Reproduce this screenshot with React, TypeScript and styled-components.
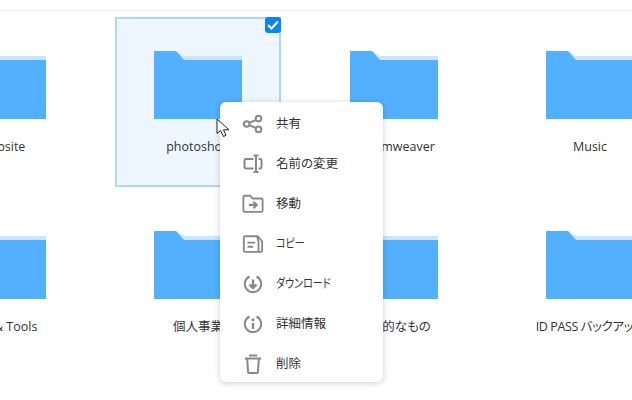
import { createGlobalStyle } from 'styled-components'
import styled from 'styled-components'

type FolderData = {
  name: string
  selected?: boolean
  tight?: boolean
}

const folders: FolderData[] = [
  { name: 'Website' },
  { name: 'photoshop', selected: true },
  { name: 'Dreamweaver' },
  { name: 'Music' },
  { name: 'Mac & Tools' },
  { name: '個人事業' },
  { name: '個人的なもの' },
  { name: 'ID PASS バックアップ', tight: true },
]

const FolderIcon = () => (
  <svg width="88" height="68" viewBox="0 0 88 68">
    <path d="M0 0H22L30 5H88V9H0Z" fill="#c9e7fd" />
    <path d="M0 0H22L30 9H88V68H0Z" fill="#52b0ff" />
  </svg>
)

const ShareIcon = () => (
  <svg width="22" height="22" viewBox="0 0 22 22" fill="none" stroke="#888" strokeWidth="2">
    <circle cx="4.7" cy="11" r="2.8" />
    <circle cx="16.5" cy="5.6" r="2.8" />
    <circle cx="16.5" cy="16.4" r="2.8" />
    <path d="M7.3 9.8L14 6.800M7.3 12.2L14 15.200" />
  </svg>
)

const RenameIcon = () => (
  <svg width="22" height="22" viewBox="0 0 22 22" fill="none" stroke="#888" strokeWidth="2">
    <path d="M11.500 6H4A1.500 1.500 0 0 0 2.500 7.500V14A1.500 1.500 0 0 0 4 15.500H11.500" />
    <path d="M16.500 6H18A1.500 1.500 0 0 1 19.500 7.500V14A1.500 1.500 0 0 1 18 15.500H16.500" />
    <path d="M14 2.500V19M11.500 2.500H16.500M11.500 19H16.500" />
  </svg>
)

const MoveIcon = () => (
  <svg width="24" height="22" viewBox="0 0 24 22" fill="none" stroke="#888" strokeWidth="2">
    <path d="M1.500 3.500A1.500 1.500 0 0 1 3 2H9L11.500 5H21A1.500 1.500 0 0 1 22.500 6.500V18A1.500 1.500 0 0 1 21 19.500H3A1.500 1.500 0 0 1 1.500 18Z" />
    <path d="M7.500 12H16M12.500 8.500L16 12L12.500 15.500" strokeWidth="2.400" />
  </svg>
)

const CopyIcon = () => (
  <svg width="24" height="22" viewBox="0 0 24 22" fill="none" stroke="#888" strokeWidth="2">
    <path d="M3.500 2.500H17L22 8V18A1.500 1.500 0 0 1 20.500 19.500H3.500A1.500 1.500 0 0 1 2 18V4A1.500 1.500 0 0 1 3.500 2.500Z" />
    <path d="M6 9.500H14.500M6 14H12" />
    <path d="M16.500 3L18 8V19" />
  </svg>
)

const DownloadIcon = () => (
  <svg width="22" height="22" viewBox="0 0 22 22" fill="none" stroke="#888" strokeWidth="2">
    <path d="M7.500 3.500A8.200 8.200 0 1 0 14.500 3.500" />
    <path d="M11 6.500V14.500M7.500 11.500L11 15L14.500 11.500" strokeWidth="2.400" />
  </svg>
)

const InfoIcon = () => (
  <svg width="22" height="22" viewBox="0 0 22 22" fill="none" stroke="#888" strokeWidth="2">
    <path d="M7.500 3.500A8.200 8.200 0 1 0 14.500 3.500" />
    <path d="M11 10V16" strokeWidth="2.400" />
    <circle cx="11" cy="6.800" r="1.500" fill="#888" stroke="none" />
  </svg>
)

const TrashIcon = () => (
  <svg width="22" height="22" viewBox="0 0 22 22" fill="none" stroke="#888" strokeWidth="2">
    <path d="M3 5.500H19M7 2.500H15" />
    <path d="M5.200 6L6 18.500A1.500 1.500 0 0 0 7.500 20H14.500A1.500 1.500 0 0 0 16 18.500L16.800 6" />
  </svg>
)

const menuItems = [
  { label: '共有', icon: <ShareIcon /> },
  { label: '名前の変更', icon: <RenameIcon /> },
  { label: '移動', icon: <MoveIcon /> },
  { label: 'コピー', icon: <CopyIcon />, katakana: true },
  { label: 'ダウンロード', icon: <DownloadIcon />, katakana: true },
  { label: '詳細情報', icon: <InfoIcon /> },
  { label: '削除', icon: <TrashIcon /> },
]

function App() {
  return (
    <Page>
      <GlobalStyle />
      <TopLine />
      <Grid>
        {folders.map((folder) => (
          <FolderCard key={folder.name} $selected={folder.selected}>
            {folder.selected && (
              <CheckBadge>
                <svg width="12" height="10" viewBox="0 0 12 10" fill="none" stroke="#fff" strokeWidth="2">
                  <path d="M1 5L4.500 8.500L11 1.500" />
                </svg>
              </CheckBadge>
            )}
            <FolderIcon />
            <FolderName $tight={folder.tight}>{folder.name}</FolderName>
          </FolderCard>
        ))}
      </Grid>
      <ContextMenu>
        {menuItems.map((item) => (
          <MenuItem key={item.label}>
            <MenuIcon>{item.icon}</MenuIcon>
            <MenuLabel $katakana={item.katakana}>{item.label}</MenuLabel>
          </MenuItem>
        ))}
      </ContextMenu>
      <Cursor width="15" height="20" viewBox="0 0 15 20">
        <path d="M1 1V15.500L4.500 12.500L7.500 18.500L10 17.300L7.500 11.800H13Z" fill="#fff" stroke="#222" strokeWidth="1" />
      </Cursor>
    </Page>
  )
}

const GlobalStyle = createGlobalStyle`
  html, body {
    margin: 0;
    background: #fff;
  }
`

const Page = styled.div`
  position: relative;
  width: 632px;
  height: 400px;
  overflow: hidden;
  font-family: "Open Sans", "Noto Sans CJK JP", sans-serif;
  font-feature-settings: "palt";
  color: #333;
`

const TopLine = styled.div`
  height: 10px;
  border-bottom: 1px solid #eee;
`

const Grid = styled.div`
  display: grid;
  grid-template-columns: repeat(4, 166px);
  grid-auto-rows: 170px;
  column-gap: 30px;
  row-gap: 10px;
  margin: 6px 0 0 -81px;
`

const FolderCard = styled.div<{ $selected?: boolean }>`
  position: relative;
  box-sizing: border-box;
  display: flex;
  flex-direction: column;
  align-items: center;
  padding-top: 32px;
  white-space: nowrap;
  border: 2px solid ${(p) => (p.$selected ? '#abd7f8' : 'transparent')};
  background: ${(p) => (p.$selected ? '#eef7ff' : 'transparent')};
`

const CheckBadge = styled.div`
  position: absolute;
  top: -2px;
  right: -2px;
  width: 16px;
  height: 16px;
  display: flex;
  align-items: center;
  justify-content: center;
  border-radius: 3px;
  background: #0a84f5;
`

const FolderName = styled.div<{ $tight?: boolean }>`
  margin-top: 20px;
  font-size: 12.5px;
  line-height: 16px;
  letter-spacing: ${(p) => (p.$tight ? '-0.4px' : '0')};
`

const ContextMenu = styled.div`
  position: absolute;
  left: 220px;
  top: 102px;
  width: 163px;
  background: #fff;
  border-radius: 6px;
  box-shadow: 0 1px 6px rgba(0, 0, 0, 0.2);
`

const MenuItem = styled.div`
  box-sizing: border-box;
  display: flex;
  align-items: center;
  height: 40px;
  padding: 0 0 0 22px;
  gap: 12px;
  font-size: 12.5px;
  color: #333;
`

const MenuIcon = styled.div`
  display: flex;
  justify-content: center;
  width: 22px;
  flex: none;
  margin-top: 4px;
`

const MenuLabel = styled.span<{ $katakana?: boolean }>`
  display: inline-block;
  margin-top: 1px;
  transform-origin: left center;
  transform: ${(p) => (p.$katakana ? 'scaleX(0.8)' : 'none')};
`

const Cursor = styled.svg`
  position: absolute;
  left: 216px;
  top: 118px;
`

export default App
